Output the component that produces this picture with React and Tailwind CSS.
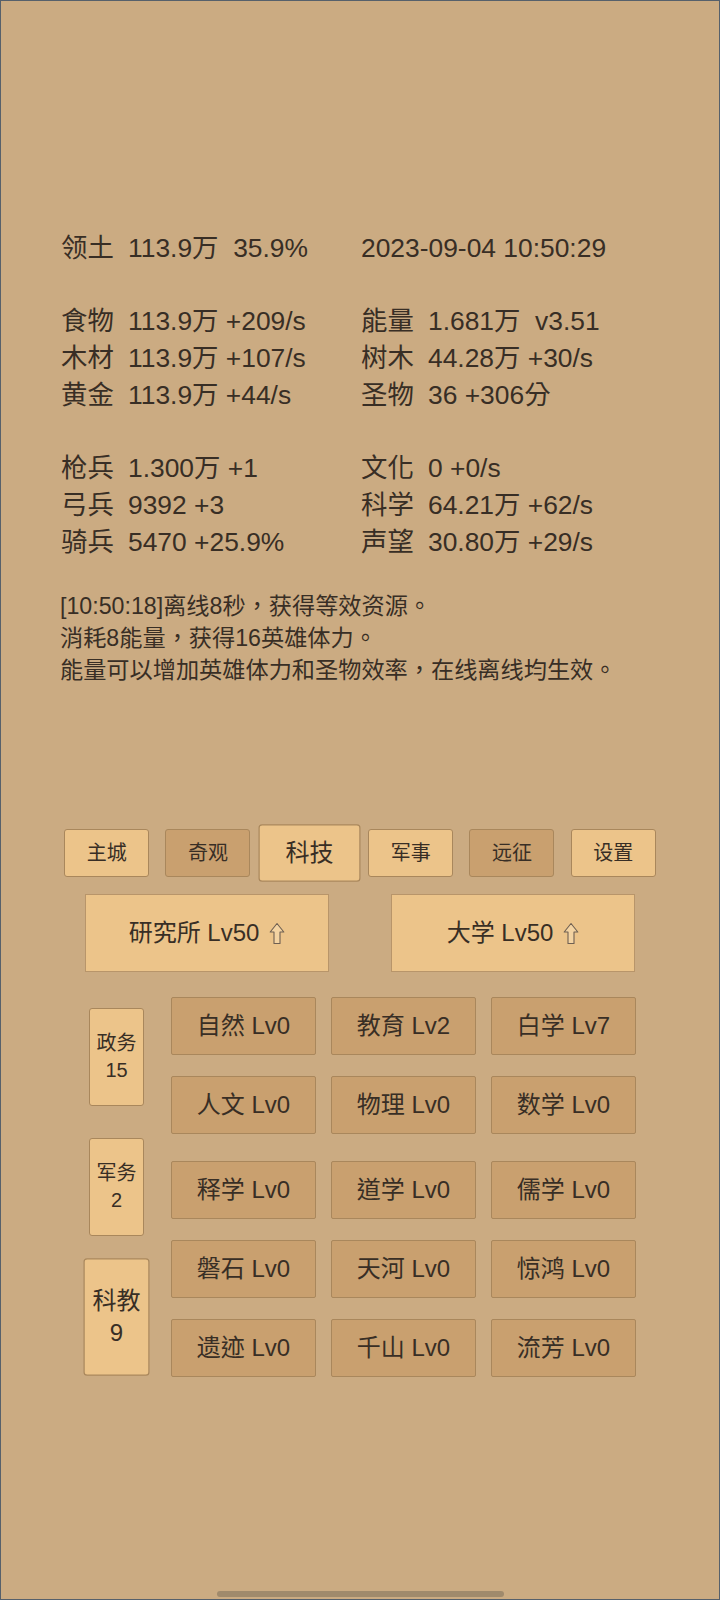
import React from "react";

const FONT = { fontFamily: '"Liberation Sans", "Noto Sans CJK TC", "Noto Sans CJK SC", sans-serif' };

const stats = [
  [["领土", "113.9万  35.9%"], ["", "2023-09-04 10:50:29"]],
  null,
  [["食物", "113.9万 +209/s"], ["能量", "1.681万  v3.51"]],
  [["木材", "113.9万 +107/s"], ["树木", "44.28万 +30/s"]],
  [["黄金", "113.9万 +44/s"], ["圣物", "36 +306分"]],
  null,
  [["枪兵", "1.300万 +1"], ["文化", "0 +0/s"]],
  [["弓兵", "9392 +3"], ["科学", "64.21万 +62/s"]],
  [["骑兵", "5470 +25.9%"], ["声望", "30.80万 +29/s"]],
];

const tabs = [
  { name: "主城", dark: false },
  { name: "奇观", dark: true },
  { name: "科技", dark: false, active: true },
  { name: "军事", dark: false },
  { name: "远征", dark: true },
  { name: "设置", dark: false },
];

const techRows = [
  { mt: "", items: ["自然 Lv0", "教育 Lv2", "白学 Lv7"] },
  { mt: "mt-[21px]", items: ["人文 Lv0", "物理 Lv0", "数学 Lv0"] },
  { mt: "mt-[27px]", items: ["释学 Lv0", "道学 Lv0", "儒学 Lv0"] },
  { mt: "mt-[21px]", items: ["磐石 Lv0", "天河 Lv0", "惊鸿 Lv0"] },
  { mt: "mt-[21px]", items: ["遗迹 Lv0", "千山 Lv0", "流芳 Lv0"] },
];

const sideBtns = [
  { name: "政务", n: 15 },
  { name: "军务", n: 2 },
  { name: "科教", n: 9, active: true },
];

function StatCell({ cell }) {
  return (
    <div className="whitespace-pre">
      {cell[0] ? <span className="inline-block w-[67px]">{cell[0]}</span> : null}
      <span>{cell[1]}</span>
    </div>
  );
}

// outlined up arrow shown after building level
function UpArrow() {
  return (
    <svg width="16" height="23" viewBox="0 0 16 23" className="ml-[10px]">
      <path
        d="M8 1.5 L14.8 10 L11 10 L11 21.5 L5 21.5 L5 10 L1.2 10 Z"
        fill="#f3d3a2"
        stroke="#6f6052"
        strokeWidth="1.1"
        strokeLinejoin="round"
      />
    </svg>
  );
}

export default function App() {
  return (
    <div
      style={FONT}
      className="relative w-[720px] h-[1600px] overflow-hidden bg-[#cbab82] border border-[#56606b] text-[#382e25]"
    >
      {/* resource stats */}
      <div className="pt-[229px] px-[60px] text-[26.4px] leading-[36.7px]">
        {stats.map((row, i) =>
          row ? (
            <div key={i} className="grid grid-cols-[300px_1fr]">
              <StatCell cell={row[0]} />
              <StatCell cell={row[1]} />
            </div>
          ) : (
            <div key={i} className="h-[36.7px]" />
          )
        )}
      </div>

      {/* log */}
      <div className="mt-[30px] px-[59px] text-[23.2px] leading-[32px]">
        <div>[10:50:18]离线8秒，获得等效资源。</div>
        <div>消耗8能量，获得16英雄体力。</div>
        <div>能量可以增加英雄体力和圣物效率，在线离线均生效。</div>
      </div>

      {/* tabs */}
      <div className="mt-[143px] mx-auto w-[608px] grid grid-cols-6 h-[48px]">
        {tabs.map((t) => (
          <div key={t.name} className="flex items-center justify-center">
            <div
              className={`w-[85px] h-[48px] flex items-center justify-center rounded-[3px] border border-[#a9875c] text-[20px] ${
                t.dark ? "bg-[#c9a06f]" : "bg-[#ecc48a]"
              } ${t.active ? "scale-[1.2]" : ""}`}
            >
              {t.name}
            </div>
          </div>
        ))}
      </div>

      {/* buildings */}
      <div className="mt-[17px] flex justify-center gap-[62px]">
        {["研究所 Lv50", "大学 Lv50"].map((b) => (
          <div
            key={b}
            className="w-[244px] h-[78px] flex items-center justify-center bg-[#ecc48a] border border-[#b8956a] text-[24px]"
          >
            {b}
            <UpArrow />
          </div>
        ))}
      </div>

      {/* tech grid */}
      <div className="mt-[25px] pl-[88px] flex">
        <div className="w-[55px] pt-[11px] flex flex-col gap-[32px]">
          {sideBtns.map((s) => (
            <div
              key={s.name}
              className={`w-[55px] h-[98px] flex flex-col items-center justify-center rounded-[3px] border border-[#a9875c] bg-[#ecc48a] text-[20px] leading-[27px] ${
                s.active ? "scale-[1.2]" : ""
              }`}
            >
              <div>{s.name}</div>
              <div>{s.n}</div>
            </div>
          ))}
        </div>
        <div className="ml-[27px]">
          {techRows.map((r, i) => (
            <div key={i} className={`flex gap-[15px] ${r.mt}`}>
              {r.items.map((it) => (
                <div
                  key={it}
                  className="w-[145px] h-[58px] flex items-center justify-center rounded-[2px] border border-[#a9875c] bg-[#c9a06f] text-[24px]"
                >
                  {it}
                </div>
              ))}
            </div>
          ))}
        </div>
      </div>

      {/* home indicator */}
      <div className="absolute left-[216px] bottom-[2px] w-[287px] h-[6px] rounded-full bg-[#a08a6c]" />
    </div>
  );
}
